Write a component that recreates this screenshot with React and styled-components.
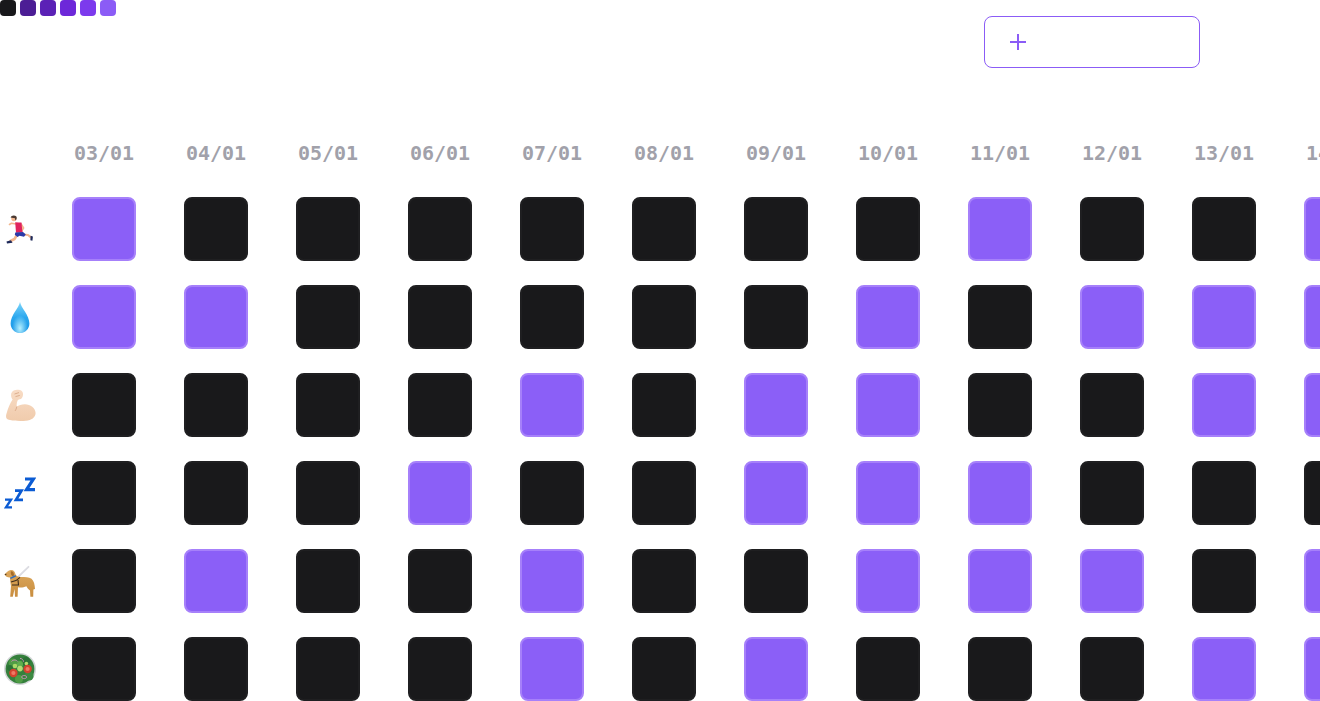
import React from "react";
import styled, { createGlobalStyle } from "styled-components";

const GlobalStyle = createGlobalStyle`
  html, body {
    margin: 0;
    padding: 0;
    background: #fff;
    overflow: hidden;
  }
`;

const dates = ["03/01", "04/01", "05/01", "06/01", "07/01", "08/01", "09/01", "10/01", "11/01", "12/01", "13/01", "14/01"];
const legend = ["#18181b", "#4c1d95", "#5b21b6", "#6d28d9", "#7c3aed", "#8b5cf6"];

const RunnerIcon = () => (
  <svg width="32" height="32" viewBox="0 0 32 32">
    <g fill="none" strokeLinecap="round" strokeLinejoin="round">
      <path d="M12 11 L7.5 10.2 L5.5 11.5" stroke="#f2b68e" strokeWidth="1.6" />
      <path d="M17 11 L19.5 15 L17.5 18" stroke="#f2b68e" strokeWidth="1.8" />
      <path d="M13.5 21 L10.5 26 L6.5 28" stroke="#f2b68e" strokeWidth="2.6" />
      <path d="M19 21.5 L24 22 L27 24.5" stroke="#f2b68e" strokeWidth="2.2" />
    </g>
    <path d="M2.5 28.6 L7 27.2 L8.5 29.8 L3 30.4Z" fill="#1f2a5a" />
    <path d="M26.6 22.8 L28.9 23.4 L28.4 27.8 L26.4 27.2Z" fill="#1f2a5a" />
    <path d="M11.2 9.2 L15 9.5 L17.5 9.6 L18.2 17 L18.8 19.6 L12 19.8 Z" fill="#e0245e" />
    <path d="M11.3 19.4 L19 19 L21.8 21.5 L20 23.8 L15.5 22.8 L13.5 24 L10.8 21.8Z" fill="#2b3aa8" />
    <circle cx="9.9" cy="5.6" r="2.6" fill="#f2b68e" />
    <path d="M6.6 4.6 C7.2 2.2 10.8 1.8 12.4 3.6 C13.1 5 12.6 6.8 11.5 7.6 L10.7 5 C9 5.2 7.6 5 6.6 4.6Z" fill="#4a3a33" />
  </svg>
);

const DropIcon = () => (
  <svg width="32" height="32" viewBox="0 0 32 32">
    <defs>
      <linearGradient id="dropFill" x1="0" y1="0" x2="0" y2="1">
        <stop offset="0" stopColor="#7fd6fa" />
        <stop offset="0.5" stopColor="#2aa7ee" />
        <stop offset="1" stopColor="#1694e6" />
      </linearGradient>
      <radialGradient id="dropGlow" cx="0.5" cy="0.85" r="0.42">
        <stop offset="0" stopColor="#b4f0ff" />
        <stop offset="1" stopColor="#b4f0ff" stopOpacity="0" />
      </radialGradient>
    </defs>
    <path d="M16 1 C17 7 25.4 14 25.4 22.5 C25.4 28 21 32 16 32 C11 32 6.6 28 6.6 22.5 C6.6 14 15 7 16 1Z" fill="url(#dropFill)" />
    <path d="M16 1 C17 7 25.4 14 25.4 22.5 C25.4 28 21 32 16 32 C11 32 6.6 28 6.6 22.5 C6.6 14 15 7 16 1Z" fill="url(#dropGlow)" />
  </svg>
);

const MuscleIcon = () => (
  <svg width="32" height="32" viewBox="0 0 32 32">
    <defs>
      <linearGradient id="armFill" x1="0" y1="0" x2="0" y2="1">
        <stop offset="0" stopColor="#f8dcc5" />
        <stop offset="1" stopColor="#f0cbac" />
      </linearGradient>
    </defs>
    <path d="M7.4 4 C8.6 1.6 11 .6 13.8 .8 C16.4 .6 18.8 2 19 4.5 C19.2 6.8 18.4 9 16.8 10 C15.4 10.6 14 10.6 13.6 11.4 C12.8 13 12.4 15 12.8 17.6 C14.6 16.2 17.4 15.2 21 15.2 C26.4 15.2 31.4 19 31.6 24 C31.6 28.4 27.2 31.4 22 31.8 C16 32.2 9 32 4.8 30.8 C2 29.8 1.6 27.6 2.4 25 C4 19.5 6 14 8.6 10.6 C7.2 8.6 6.6 6 7.4 4Z" fill="url(#armFill)" />
    <path d="M10.5 5 L15 3.6 M11.5 7.6 L15.8 6.4 M12.8 17.6 C12.4 19.6 11.8 21 11 22" stroke="#d9a988" strokeWidth="0.9" fill="none" />
  </svg>
);

const ZzzIcon = () => (
  <svg width="32" height="34" viewBox="0 0 32 34">
    <g fill="none" stroke="#0b5bd3" strokeLinejoin="miter" strokeMiterlimit="6">
      <path d="M21 3 H29.5 L22.5 13.6 H31" strokeWidth="3.2" />
      <path d="M11 14.6 H17.5 L12 23.8 H19" strokeWidth="2.8" />
      <path d="M1 23.6 H7 L2 31.4 H8" strokeWidth="2.4" />
    </g>
  </svg>
);

const DogIcon = () => (
  <svg width="32" height="32" viewBox="0 0 32 32">
    <defs>
      <linearGradient id="dogFill" x1="0" y1="0" x2="0" y2="1">
        <stop offset="0" stopColor="#dda85c" />
        <stop offset="1" stopColor="#c88d3f" />
      </linearGradient>
    </defs>
    <path d="M14 12 L24.5 1.8" stroke="#dcdce2" strokeWidth="1.8" strokeLinecap="round" />
    <path d="M.5 9.4 C2 8.4 3.6 5.6 6.6 5 C9.4 4.6 11 6.4 11.4 9 C12 11.2 14 11.8 17 12 C21 12.2 25 12 27.5 13.8 C30 15.8 30.8 20 31 24 L29.4 24.6 L29.2 31.8 L26.4 31.8 L26 25.4 C24.4 24.4 23 22.6 22.4 21.2 C19.5 22.6 16.4 22.8 14 22.2 L13.6 31.8 L11 31.8 L10.6 24 L8.8 31.8 L6.2 31.8 L7 21 C6.4 17 6 14 6 12.4 C4 12.6 1.4 11.4 .5 9.4Z" fill="url(#dogFill)" />
    <path d="M6.8 6.2 C9 6 10.4 8 9.8 11 C8.6 11.8 7.2 10.4 6.8 8.4Z" fill="#a56c2a" />
    <path d="M.5 9.4 L2.2 8.6 L2.4 10.2Z" fill="#3a2a1d" />
    <path d="M6.4 13.4 L11.8 10.8" stroke="#2f6fc0" strokeWidth="1.5" />
    <path d="M7 17 L12 15.6 L16 12.4" stroke="#3a2a1d" strokeWidth="1.1" fill="none" />
    <path d="M8 20 L14.5 20 L14 15" stroke="#3a2a1d" strokeWidth="1.1" fill="none" />
  </svg>
);

const SaladIcon = () => (
  <svg width="32" height="32" viewBox="0 0 32 32">
    <circle cx="16" cy="16" r="16" fill="#d3d6d8" />
    <circle cx="16" cy="16" r="14.4" fill="#35803c" />
    <circle cx="9" cy="10" r="4.4" fill="#4f9c45" />
    <circle cx="22" cy="8.5" r="4.4" fill="#2b7236" />
    <circle cx="25" cy="23" r="4.6" fill="#3c8a42" />
    <circle cx="15" cy="26" r="4" fill="#4f9c45" />
    <circle cx="6" cy="15" r="3" fill="#2b7236" />
    <circle cx="16" cy="11" r="3" fill="#5fae4e" />
    <circle cx="16" cy="15.6" r="2.8" fill="#b3dc74" />
    <circle cx="11" cy="13" r="2.3" fill="#a8d968" />
    <circle cx="22.4" cy="10.6" r="1.8" fill="#b8dd70" />
    <circle cx="9.4" cy="20" r="4.2" fill="#d4432f" />
    <circle cx="23.6" cy="16" r="4.2" fill="#d4432f" />
    <circle cx="9.4" cy="20" r="2.1" fill="#ee7a64" />
    <circle cx="23.6" cy="16" r="2.1" fill="#ee7a64" />
    <path d="M7.5 8.5 C9 6.4 12.5 6.6 13.8 8.6 M16 5.4 C18 5.4 19.6 7 19.4 8.8" stroke="#c98fb8" strokeWidth="1" fill="none" />
    <path d="M17.4 24 C18.4 22 22 22 22.8 24 C22.2 26 18.8 26.4 17.4 24Z" stroke="#c98fb8" strokeWidth="1" fill="none" />
  </svg>
);

const habits = [
  { id: "run", icon: <RunnerIcon />, days: [1, 0, 0, 0, 0, 0, 0, 0, 1, 0, 0, 1] },
  { id: "water", icon: <DropIcon />, days: [1, 1, 0, 0, 0, 0, 0, 1, 0, 1, 1, 1] },
  { id: "gym", icon: <MuscleIcon />, days: [0, 0, 0, 0, 1, 0, 1, 1, 0, 0, 1, 1] },
  { id: "sleep", icon: <ZzzIcon />, days: [0, 0, 0, 1, 0, 0, 1, 1, 1, 0, 0, 0] },
  { id: "dog", icon: <DogIcon />, days: [0, 1, 0, 0, 1, 0, 0, 1, 1, 1, 0, 1] },
  { id: "food", icon: <SaladIcon />, days: [0, 0, 0, 0, 1, 0, 1, 0, 0, 0, 1, 1] },
];

const App = () => {
  return (
    <Page>
      <GlobalStyle />
      <Header>
        <Legend>
          {legend.map((color) => (
            <Swatch key={color} $color={color} />
          ))}
        </Legend>
        <AddButton type="button" aria-label="Add habit">
          <svg width="16" height="16" viewBox="0 0 16 16">
            <path d="M8 0V16M0 8H16" stroke="#8b5cf6" strokeWidth="2" fill="none" />
          </svg>
        </AddButton>
      </Header>
      <DateRow>
        {dates.map((date) => (
          <DateLabel key={date}>{date}</DateLabel>
        ))}
      </DateRow>
      <Rows>
        {habits.map((habit) => (
          <Row key={habit.id}>
            <Emoji>{habit.icon}</Emoji>
            <Cells>
              {habit.days.map((done, i) => (
                <Cell key={i} $done={done === 1} />
              ))}
            </Cells>
          </Row>
        ))}
      </Rows>
    </Page>
  );
};

const Page = styled.main`
  width: 1320px;
  height: 701px;
  overflow: hidden;
  display: flex;
  flex-direction: column;
`;

const Header = styled.header`
  height: 141px;
  display: flex;
  justify-content: space-between;
  align-items: flex-start;
  padding-right: 120px;
  box-sizing: border-box;
`;

const Legend = styled.div`
  display: flex;
  gap: 4px;
`;

const Swatch = styled.span`
  width: 16px;
  height: 16px;
  border-radius: 4px;
  background: ${(p) => p.$color};
`;

const AddButton = styled.button`
  width: 216px;
  height: 52px;
  margin-top: 16px;
  padding: 0 0 0 25px;
  display: flex;
  align-items: center;
  background: #fff;
  border: 1px solid #8b5cf6;
  border-radius: 8px;
  box-sizing: border-box;
`;

const DateRow = styled.div`
  display: flex;
  gap: 48px;
  height: 24px;
  margin-bottom: 32px;
  padding-left: 72px;
`;

const DateLabel = styled.div`
  flex: 0 0 64px;
  display: flex;
  justify-content: center;
  align-items: center;
  white-space: nowrap;
  font-family: "DejaVu Sans Mono", "Liberation Mono", monospace;
  font-size: 20px;
  font-weight: 700;
  color: #a1a1aa;
`;

const Rows = styled.div`
  display: flex;
  flex-direction: column;
  gap: 24px;
`;

const Row = styled.div`
  display: flex;
  align-items: center;
`;

const Emoji = styled.div`
  flex: 0 0 72px;
  height: 64px;
  padding-left: 4px;
  box-sizing: border-box;
  display: flex;
  align-items: center;

  svg {
    display: block;
  }
`;

const Cells = styled.div`
  display: flex;
  gap: 48px;
`;

const Cell = styled.div`
  flex: 0 0 64px;
  height: 64px;
  box-sizing: border-box;
  border-radius: 8px;
  background: ${(p) => (p.$done ? "#8b5ff7" : "#19191b")};
  border: 2px solid ${(p) => (p.$done ? "#a680fa" : "#1f1f21")};
`;

export default App;
